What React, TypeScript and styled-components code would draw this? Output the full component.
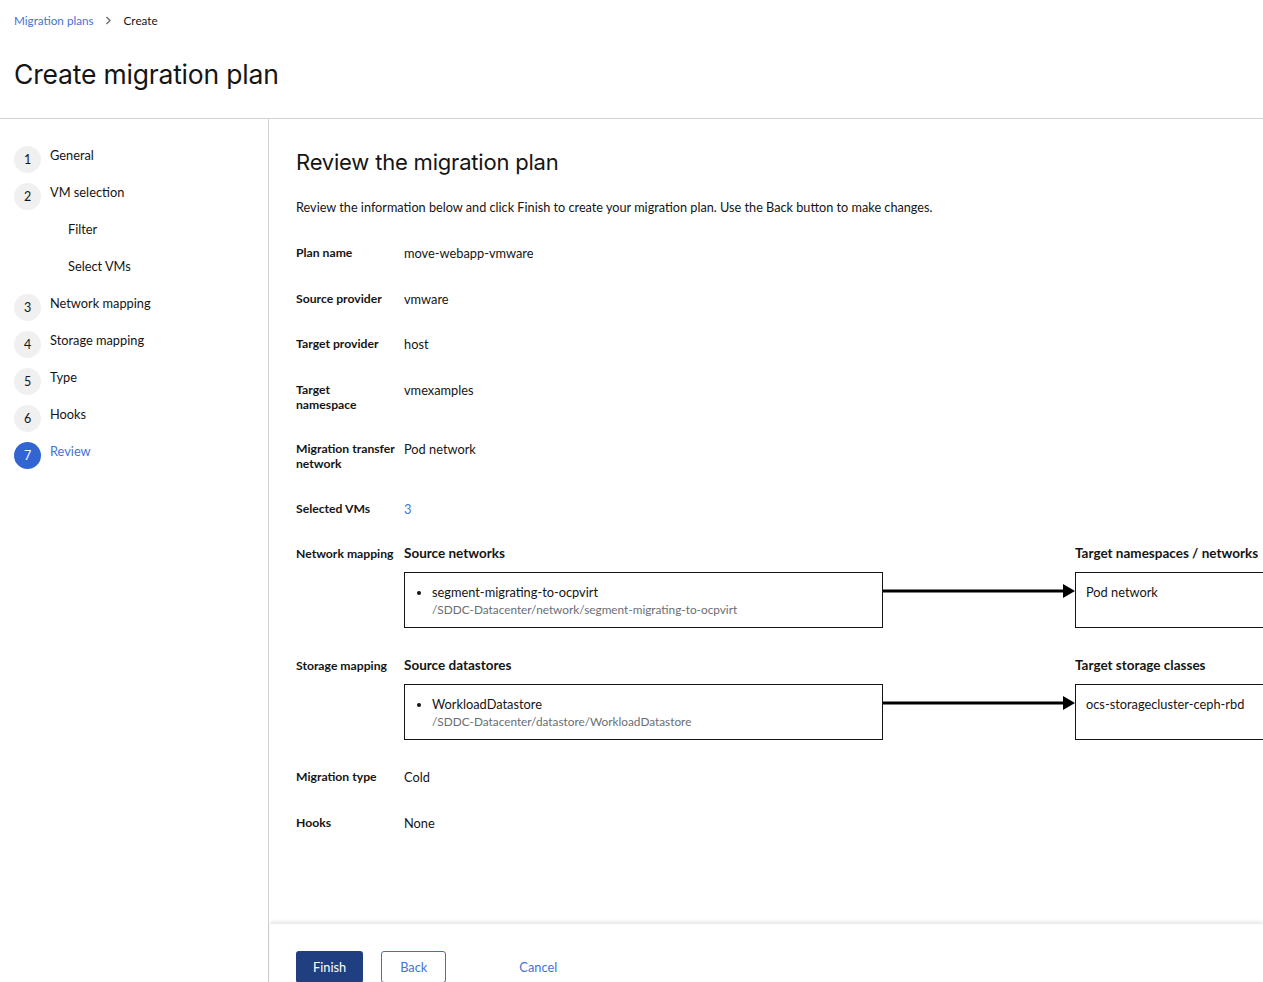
import React from "react";
import styled, { createGlobalStyle } from "styled-components";

const Global = createGlobalStyle`
  html, body { margin: 0; padding: 0; background: #fff; }
  body {
    font-family: Lato, "Open Sans", "Liberation Sans", sans-serif;
    color: #151515;
    font-size: 12.8px;
    overflow: hidden;
    width: 1263px;
    height: 982px;
  }
  * { box-sizing: border-box; }
`;

const Page = styled.div`
  display: flex;
  flex-direction: column;
  width: 1263px;
`;

const Header = styled.header`
  padding: 12px 14px 0 14px;
  height: 119px;
  border-bottom: 1px solid #d2d2d2;
`;

const Crumbs = styled.nav`
  display: flex;
  align-items: center;
  font-size: 11.7px;
  line-height: 16px;
`;

const CrumbLink = styled.a`
  color: #4572d6;
  text-decoration: none;
`;

const CrumbSep = styled.span`
  display: flex;
  align-items: center;
  margin: 0 12px 0 11px;
`;

const Title = styled.h1`
  margin: 28px 0 0 0;
  font-family: Inter, Lato, sans-serif;
  font-weight: 400;
  font-size: 26.5px;
  line-height: 36px;
  letter-spacing: -0.2px;
`;

const Body = styled.div`
  display: flex;
  align-items: stretch;
  min-height: 900px;
`;

const Nav = styled.ol`
  list-style: none;
  margin: 0;
  padding: 27px 14px 0 14px;
  width: 269px;
  flex: none;
  border-right: 1px solid #d2d2d2;
  display: flex;
  flex-direction: column;
  gap: 10px;
`;

const NavItem = styled.li<{ $sub?: boolean }>`
  display: flex;
  align-items: flex-start;
  gap: 9px;
  height: 27px;
  padding-left: ${(p) => (p.$sub ? "54px" : "0")};
`;

const Circle = styled.span<{ $current?: boolean }>`
  width: 27px;
  height: 27px;
  flex: none;
  border-radius: 50%;
  background: ${(p) => (p.$current ? "#3264d2" : "#f0f0f0")};
  color: ${(p) => (p.$current ? "#fff" : "#151515")};
  display: flex;
  align-items: center;
  justify-content: center;
  font-size: 12.5px;
`;

const NavLabel = styled.span<{ $current?: boolean }>`
  font-size: 12.8px;
  line-height: 16px;
  color: ${(p) => (p.$current ? "#4572d6" : "#151515")};
  margin-top: 1px;
`;

const Main = styled.main`
  flex: 1;
  display: flex;
  flex-direction: column;
  min-width: 0;
`;

const Content = styled.div`
  padding: 28px 0 92.5px 27px;
`;

const H2 = styled.h2`
  margin: 0;
  font-family: Inter, Lato, sans-serif;
  font-weight: 400;
  font-size: 22px;
  line-height: 30px;
  letter-spacing: -0.2px;
`;

const Intro = styled.p`
  margin: 22px 0 30px 0;
  font-size: 12.7px;
  line-height: 16px;
`;

const List = styled.dl`
  margin: 0;
  display: grid;
  grid-template-columns: 108px 1fr;
  row-gap: 29.5px;
`;

const Term = styled.dt`
  font-weight: 700;
  font-size: 12.2px;
  line-height: 15px;
  padding-right: 2px;
  white-space: nowrap;
`;

const Value = styled.dd`
  margin: 0;
  font-size: 12.8px;
  line-height: 16px;
`;

const ValueLink = styled.a`
  color: #4572d6;
  text-decoration: none;
`;

const Mapping = styled.div`
  display: grid;
  grid-template-columns: 479px 192px 220px;
  row-gap: 11px;
`;

const ColHead = styled.div`
  font-size: 13.5px;
  line-height: 15px;
  font-weight: 700;
  color: #151515;
`;

const Spacer = styled.div``;

const Box = styled.div`
  border: 1px solid #151515;
  height: 56px;
  padding: 10px 10px;
`;

const SourceList = styled.ul`
  margin: 0;
  padding-left: 17px;
`;

const SourceItem = styled.li`
  font-size: 12.8px;
  line-height: 18px;
`;

const SubPath = styled.div`
  color: #6a6e73;
  font-size: 11.8px;
  line-height: 18px;
`;

const TargetText = styled.div`
  font-size: 12.8px;
  line-height: 18px;
`;

const ArrowWrap = styled.div`
  display: flex;
  align-items: flex-start;
  padding-top: 12px;
`;

const Footer = styled.footer`
  display: flex;
  align-items: flex-start;
  gap: 18px;
  padding: 27px 26px 0 26px;
  height: 80px;
  box-shadow: 0 -2px 4px -1px rgba(0, 0, 0, 0.12);
  border-top: 1px solid #ececec;
  margin-left: 1px;
`;

const Button = styled.button<{ $variant: "primary" | "secondary" | "link" }>`
  font-family: Lato, sans-serif;
  font-size: 12.8px;
  height: 32px;
  padding: ${(p) => (p.$variant === "secondary" ? "0 18px" : "0 16px")};
  border-radius: 3px;
  cursor: pointer;
  background: ${(p) => (p.$variant === "primary" ? "#1f3f80" : "#fff")};
  color: ${(p) => (p.$variant === "primary" ? "#fff" : "#4572d6")};
  border: ${(p) =>
    p.$variant === "secondary" ? "1px solid #3e6ed0" : "1px solid transparent"};
  margin-left: ${(p) => (p.$variant === "link" ? "38px" : "0")};
`;

function Arrow() {
  return (
    <svg width="192" height="14" viewBox="0 0 192 14">
      <rect x="0" y="5.5" width="182" height="3" fill="#000" />
      <polygon points="180,0 192,7 180,14" fill="#000" />
    </svg>
  );
}

function Chevron() {
  return (
    <svg width="7" height="9" viewBox="0 0 7 9">
      <path d="M1.5 1 L5 4.5 L1.5 8" stroke="#6a6e73" strokeWidth="1.4" fill="none" />
    </svg>
  );
}

const steps: { n?: number; label: string; sub?: boolean; current?: boolean }[] = [
  { n: 1, label: "General" },
  { n: 2, label: "VM selection" },
  { label: "Filter", sub: true },
  { label: "Select VMs", sub: true },
  { n: 3, label: "Network mapping" },
  { n: 4, label: "Storage mapping" },
  { n: 5, label: "Type" },
  { n: 6, label: "Hooks" },
  { n: 7, label: "Review", current: true },
];

function MappingBlock(props: {
  sourceHead: string;
  targetHead: string;
  name: string;
  path: string;
  target: string;
}) {
  return (
    <Mapping>
      <ColHead>{props.sourceHead}</ColHead>
      <Spacer />
      <ColHead>{props.targetHead}</ColHead>
      <Box>
        <SourceList>
          <SourceItem>
            {props.name}
            <SubPath>{props.path}</SubPath>
          </SourceItem>
        </SourceList>
      </Box>
      <ArrowWrap>
        <Arrow />
      </ArrowWrap>
      <Box>
        <TargetText>{props.target}</TargetText>
      </Box>
    </Mapping>
  );
}

export default function App() {
  return (
    <>
      <Global />
      <Page>
        <Header>
          <Crumbs>
            <CrumbLink href="#">Migration plans</CrumbLink>
            <CrumbSep>
              <Chevron />
            </CrumbSep>
            <span>Create</span>
          </Crumbs>
          <Title>Create migration plan</Title>
        </Header>
        <Body>
          <Nav>
            {steps.map((s) => (
              <NavItem key={s.label} $sub={s.sub}>
                {!s.sub && <Circle $current={s.current}>{s.n}</Circle>}
                <NavLabel $current={s.current}>{s.label}</NavLabel>
              </NavItem>
            ))}
          </Nav>
          <Main>
            <Content>
              <H2>Review the migration plan</H2>
              <Intro>
                Review the information below and click Finish to create your migration
                plan. Use the Back button to make changes.
              </Intro>
              <List>
                <Term>Plan name</Term>
                <Value>move-webapp-vmware</Value>
                <Term>Source provider</Term>
                <Value>vmware</Value>
                <Term>Target provider</Term>
                <Value>host</Value>
                <Term>
                  Target
                  <br />
                  namespace
                </Term>
                <Value>vmexamples</Value>
                <Term>
                  Migration transfer
                  <br />
                  network
                </Term>
                <Value>Pod network</Value>
                <Term>Selected VMs</Term>
                <Value>
                  <ValueLink href="#">3</ValueLink>
                </Value>
                <Term>Network mapping</Term>
                <Value>
                  <MappingBlock
                    sourceHead="Source networks"
                    targetHead="Target namespaces / networks"
                    name="segment-migrating-to-ocpvirt"
                    path="/SDDC-Datacenter/network/segment-migrating-to-ocpvirt"
                    target="Pod network"
                  />
                </Value>
                <Term>Storage mapping</Term>
                <Value>
                  <MappingBlock
                    sourceHead="Source datastores"
                    targetHead="Target storage classes"
                    name="WorkloadDatastore"
                    path="/SDDC-Datacenter/datastore/WorkloadDatastore"
                    target="ocs-storagecluster-ceph-rbd"
                  />
                </Value>
                <Term>Migration type</Term>
                <Value>Cold</Value>
                <Term>Hooks</Term>
                <Value>None</Value>
              </List>
            </Content>
            <Footer>
              <Button $variant="primary">Finish</Button>
              <Button $variant="secondary">Back</Button>
              <Button $variant="link">Cancel</Button>
            </Footer>
          </Main>
        </Body>
      </Page>
    </>
  );
}
